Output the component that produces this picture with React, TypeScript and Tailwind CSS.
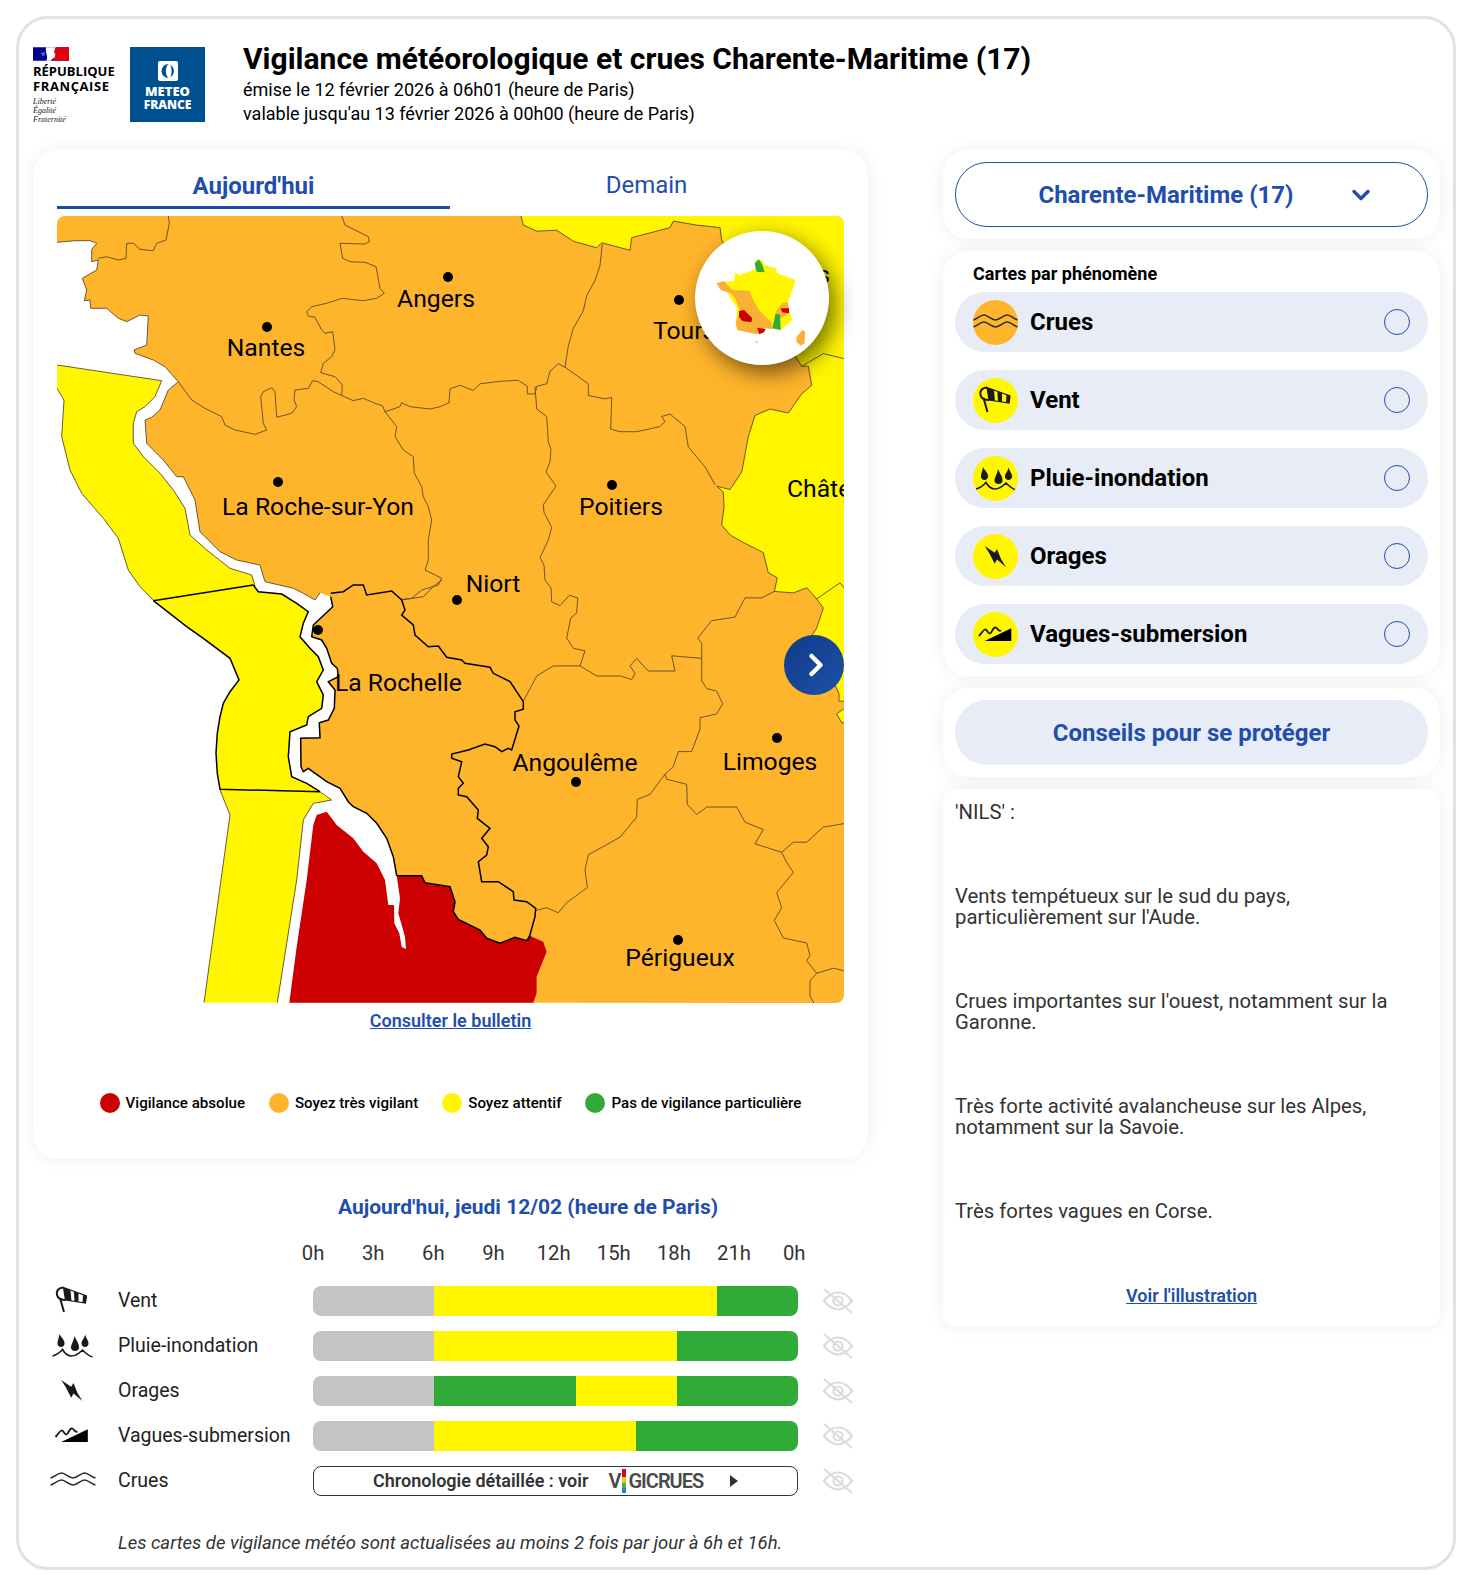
import { ChevronDown, ChevronRight } from "lucide-react";

const ORANGE = "#ffb52b";
const YELLOW = "#fff600";
const RED = "#cc0000";

// map outlines are noted in the coordinates of three crops, then moved to page coordinates
const crop = (ox: number, oy: number, sx: number, sy: number) => (pts: string) =>
  pts
    .trim()
    .split(/\s+/)
    .map((s) => {
      const [x, y] = s.split(",").map(Number);
      return `${(ox + x * sx).toFixed(1)},${(oy + y * sy).toFixed(1)}`;
    })
    .join(" ");
const a = crop(50, 210, 1 / 3, 1 / 3);
const b = crop(140, 580, 1 / 3, 1 / 3);
const c = crop(440, 210, 1 / 3, 1 / 1.985);

const redEdge =
  "1170,1067 1160,1082 1125,1072 1080,1090 1040,1075 1020,1050 955,1018 940,995 945,965 930,920 855,908 845,887 770,887";
const coast =
  "770,887 760,830 740,775 710,730 680,700 640,680 625,665 600,625 560,605 505,565 490,575 483,560 482,475 540,473 538,428 565,420 583,385 585,330 565,305 595,290 592,265 575,250 560,205 545,180 515,170 520,135 578,80 572,50";
const northCoast = a(
  "810,1148 795,1170 760,1150 730,1135 645,1115 630,1065 560,1050 510,1025 450,965 435,870 400,800 380,800 340,750 290,700 285,630 305,622 330,600 355,540 385,515 345,470 310,450 255,430 252,420 290,405 295,318 270,315 230,335 205,325 170,295 122,295 120,270 103,272 110,240 97,205 140,180 145,150 125,155 125,118 140,100 120,92 75,92 21,97"
);

const land = [
  a("21,18"),
  "844,216 844,1003",
  b("1180,1268 1190,1240 1190,1190 1220,1115 1210,1085"),
  b(redEdge),
  b(coast),
  b("540,38"),
  northCoast,
].join(" ");

const seaEdgeWest = b("192,1268 270,705 240,630");
const seaEdgeEast = a(
  "21,465 335,512 315,560 285,590 260,605 250,640 250,700 280,740 330,790 370,840 405,895 420,975 470,1020 540,1075 605,1095 615,1128"
);
const seaEdgeSouth = b("540,635 575,660 520,670 490,720 470,900 412,1268");
const seaEdgeNorth = a("310,1170 270,1130 235,1080 205,985 160,925 95,850 60,780 35,680 42,570 21,535");

const seaYellow = [
  seaEdgeEast,
  b(
    "355,35 425,42 470,70 505,95 490,130 480,170 510,205 535,230 550,270 530,305 550,345 545,385 505,410 500,435 450,455 445,530 455,590 500,610 575,660 520,670 490,720 470,900 412,1268 192,1268 270,705 240,630 232,580 228,520 232,460 240,410 250,370 270,335 297,300 270,235 190,175 140,140 40,62"
  ),
  a("270,1130 235,1080 205,985 160,925 95,850 60,780 35,680 42,570 21,535"),
].join(" ");

const eastEdge = c(
  "243,12 250,30 290,42 350,40 400,62 470,75 485,65 570,80 575,55 690,35 700,22 770,30 840,35 845,60 1085,310 1105,310 1115,348 1085,365 1045,403 990,395 945,408 925,450 905,520 870,555 830,548 850,560 852,590 845,625 870,645 910,660 970,680 985,720 1012,730 1003,757 1060,760 1100,750 1130,772 1150,790 1130,830 1115,845 1197,960 1197,975 1212,975"
);
const eastYellow = `${eastEdge} ${c("1212,12")}`;

const redZone = b(
  "448,1268 470,1100 500,900 520,735 530,705 560,695 590,735 640,775 670,815 710,850 735,900 745,975 762,975 763,1030 778,1060 785,1100 798,1107 795,1070 785,1035 775,1000 780,955 770,887 845,887 855,908 930,920 945,965 940,995 955,1018 1020,1050 1040,1075 1080,1090 1125,1072 1160,1082 1170,1067 1210,1085 1220,1115 1190,1190 1190,1240 1180,1268"
);

const thinLines = [
  northCoast,
  eastEdge,
  seaEdgeWest,
  seaEdgeEast,
  seaEdgeSouth,
  seaEdgeNorth,
  c("1190,1000 1212,990"),
  c("1190,1000 1205,1018 1212,1018"),
  a("355,18 358,40 348,90 320,100 310,122 270,118 250,100 230,100 228,145 205,150 170,140 145,145"),
  a(
    "875,18 885,45 955,80 958,95 945,102 870,100 878,145 900,155 945,157 978,170 990,235 1003,250 980,265 940,272 875,265 830,280 785,290 770,305 775,318 795,322 815,360 825,370 848,365 855,420 845,440 820,460 812,488 855,500 877,525 875,555"
  ),
  a(
    "385,515 425,570 465,595 515,620 525,645 555,660 615,673 650,660 640,640 632,560 640,545 665,533 675,545 680,622 725,610 740,590 732,570 735,540 775,535 788,512 805,515 850,545 910,572 940,565 975,580 998,588 1005,605 1050,590 1055,578 1080,590 1140,597 1170,590 1197,578"
  ),
  a(
    "1005,605 1040,650 1035,680 1060,720 1090,740 1093,790 1115,830 1120,860 1135,890 1145,930 1135,990 1135,1050 1125,1080 1175,1105 1165,1125 1115,1140 1085,1165 1055,1168"
  ),
  c(
    "27,383 30,355 60,348 100,358 120,345 180,340 235,338 262,350 262,365 285,365 290,350 320,345 330,320 355,305 375,312"
  ),
  c(
    "487,68 480,110 465,140 440,170 430,200 400,235 385,270 375,312 445,345 445,368 495,375 515,372 512,435 540,440 590,440 660,430 675,420 665,410 690,405 735,430 745,470 795,510 825,545"
  ),
  c(
    "285,350 290,395 320,410 325,460 333,475 330,500 318,520 348,548 310,585 312,600 335,630 325,655 300,690 312,705 315,735 333,750 335,778 360,785 388,765 413,770 410,800 392,810 380,850 400,870 435,875 420,905"
  ),
  c("250,975 290,925 340,905 420,905 470,925 540,925 575,932 585,920 570,905 590,890 625,915 705,915 695,885 785,890"),
  c("785,890 785,860 773,850 815,815 885,808 915,770 965,770 1003,757"),
  c(
    "785,890 785,935 800,950 830,955 848,980 830,1000 780,1008 780,1030 755,1075 715,1075 700,1105 675,1120 680,1130 740,1140 742,1180 770,1200 800,1185 890,1185 915,1215 970,1230 945,1258 1025,1275 1060,1255 1100,1255 1150,1225 1212,1218"
  ),
  c(
    "675,1120 630,1160 592,1170 590,1205 540,1245 445,1280 435,1310 442,1345 380,1375 355,1395 320,1385 288,1390"
  ),
  c(
    "1025,1275 1040,1295 1060,1315 1010,1355 1025,1385 1003,1410 1030,1445 1100,1455 1110,1480 1100,1490 1130,1515 1110,1530 1110,1560 1130,1585"
  ),
  c("1130,1515 1180,1505 1212,1510"),
  c("1130,772 1200,740 1212,750"),
  c("1085,310 1150,285 1212,295"),
  b("785,60 850,50 880,20 905,0"),
];

const blackLines = [
  b(coast),
  b(redEdge),
  b(
    "572,40 610,35 640,15 670,15 680,45 755,33 785,60 795,90 785,105 820,135 825,165 865,200 895,198 920,232 965,240 975,250 1050,262 1060,280 1110,305 1150,365 1150,388 1125,395 1125,420 1137,438 1115,510 1105,505 1085,515 1065,500 1035,492 985,510 935,522 935,535 965,545 955,590 970,610 955,625 955,645 980,650 1015,690 1012,715 1050,745 1025,775 1045,800 1040,825 1015,845 1025,905 1075,905 1120,935 1122,960 1160,965 1187,985 1185,1010 1165,1082"
  ),
  b(
    "340,15 355,35 425,42 470,70 505,95 490,130 480,170 510,205 535,230 550,270 530,305 550,345 545,385 505,410 500,435 450,455 445,530 455,590 500,610 540,635"
  ),
  b("40,62 140,140 190,175 270,235 297,300 270,335 250,370 240,410 232,460 228,520 232,580 240,628 540,635"),
  b("40,62 340,15"),
];

const cities = [
  { name: "Angers", dot: [448, 277], x: 436, y: 307, anchor: "middle" },
  { name: "Nantes", dot: [267, 327], x: 266, y: 356, anchor: "middle" },
  { name: "Tours", dot: [679, 300], x: 653, y: 339, anchor: "start" },
  { name: "La Roche-sur-Yon", dot: [278, 482], x: 318, y: 515, anchor: "middle" },
  { name: "Poitiers", dot: [612, 485], x: 621, y: 515, anchor: "middle" },
  { name: "Niort", dot: [457, 600], x: 493, y: 592, anchor: "middle" },
  { name: "La Rochelle", dot: [318, 630], x: 335, y: 691, anchor: "start" },
  { name: "Angoulême", dot: [576, 782], x: 575, y: 771, anchor: "middle" },
  { name: "Limoges", dot: [777, 738], x: 770, y: 770, anchor: "middle" },
  { name: "Périgueux", dot: [678, 940], x: 680, y: 966, anchor: "middle" },
  { name: "Châteauroux", dot: [900, 450], x: 787, y: 497, anchor: "start" },
  { name: "Orléans", dot: [900, 250], x: 830, y: 283, anchor: "end" },
];

function RegionMap() {
  return (
    <svg viewBox="57 216 787 787" className="block h-[787px] w-[787px] rounded-lg bg-white">
      <polygon points={land} fill={ORANGE} />
      <polygon points={eastYellow} fill={YELLOW} />
      <polygon points={c("1190,1000 1212,990 1212,1018 1205,1018")} fill={YELLOW} />
      <polygon points={seaYellow} fill={YELLOW} />
      <polygon points={redZone} fill={RED} />
      {thinLines.map((pts, i) => (
        <polyline key={i} points={pts} fill="none" stroke="#5b4a2a" strokeWidth="0.9" />
      ))}
      {blackLines.map((pts, i) => (
        <polyline key={i} points={pts} fill="none" stroke="#000" strokeWidth="1.5" />
      ))}
      {cities.map((city) => (
        <g key={city.name}>
          <circle cx={city.dot[0]} cy={city.dot[1]} r="5" fill="#000" />
          <text
            x={city.x}
            y={city.y}
            textAnchor={city.anchor as "start" | "middle" | "end"}
            fontFamily="Roboto, sans-serif"
            fontSize="24.7"
            fill="#000"
          >
            {city.name}
          </text>
        </g>
      ))}
    </svg>
  );
}

function MiniFrance() {
  return (
    <svg viewBox="43 48 402 402" className="h-[134px] w-[134px]">
      <polygon
        points="108,205 160,197 165,172 175,180 222,165 225,135 245,135 250,150 285,160 290,175 345,195 335,225 322,262 325,285 335,315 300,345 275,340 250,340 230,358 170,345 165,325 170,280 150,250 135,225"
        fill={YELLOW}
      />
      <polygon
        points="108,205 130,198 155,225 208,228 218,255 235,285 255,305 272,322 275,342 250,340 230,358 170,345 165,325 178,285 163,250 150,235 120,225"
        fill="#f9b037"
      />
      <polygon points="222,145 235,133 245,150 252,172 228,170" fill="#31ab37" />
      <polygon points="175,288 190,285 215,310 212,322 185,318 175,305" fill={RED} />
      <polygon points="230,338 255,342 250,352 235,358" fill={RED} />
      <polygon points="285,290 305,265 322,262 325,295 300,310" fill="#f9b037" />
      <polygon points="300,280 325,280 325,295 305,292" fill={RED} />
      <polygon points="285,295 298,300 300,345 275,340" fill="#31ab37" />
      <polygon points="348,365 365,345 373,350 372,385 360,392 347,380" fill="#f9b037" />
      <polygon points="222,378 232,380 228,385" fill="#f9b037" />
    </svg>
  );
}

function WindIcon() {
  return (
    <svg viewBox="0 0 45 45" className="h-full w-full" fill="none" stroke="#1a1a1a">
      <path d="M14 9.500C9 9.500 6.500 13 7.500 17 8.300 20 11.500 22 16 22" strokeWidth="2" />
      <path d="M10.500 20 14.500 34" strokeWidth="2" />
      <path d="M14 9.500 37 18 36 25 16 22Z" strokeWidth="1.2" />
      <path
        d="M14 9.500 20.900 12.050 22 22.900 16 22Z M24.350 13.300 28.950 15 29 23.950 25 23.350Z M33.550 16.700 37 18 36 25 33 24.550Z"
        fill="#1a1a1a"
        stroke="none"
      />
    </svg>
  );
}

function RainIcon() {
  return (
    <svg viewBox="0 0 45 45" className="h-full w-full" fill="#1a1a1a">
      <path d="M10 11C12 15 15.500 17 15 21 14.500 25 8.500 25 8 21 7.700 18 9.500 15 10 11Z" />
      <path d="M25 13C27 18 30 21 29.500 25 29 29 22 29 21.500 25 21.200 22 24.300 18 25 13Z" />
      <path d="M36 11C35.500 15 39.500 17 39 21 38.500 25 32.500 25 32 21 31.700 18 35 15 36 11Z" />
      <path
        d="M3 33C7 32 10 30 13 26.500 15 30 18 33 22 33 27 33 30 30 33 27 36 30 39 33 43 34"
        fill="none"
        stroke="#1a1a1a"
        strokeWidth="1.600"
      />
    </svg>
  );
}

function BoltIcon() {
  return (
    <svg viewBox="0 0 45 45" className="h-full w-full">
      <polygon points="11.700,12 21.700,18.700 24,15 28,25 33,33 24,25.500 21.700,29.700 16,18.700" fill="#1a1a1a" />
    </svg>
  );
}

function SurgeIcon() {
  return (
    <svg viewBox="0 0 45 45" className="h-full w-full">
      <polygon points="11.700,29 38.300,16.300 38.300,29" fill="#000" />
      <path
        d="M6 24C8 22 10 18 12 17.500 14 17 15 22 17 21.500 19 21 19.500 16 22 15.500 24.500 15 25 20 28 18.500"
        fill="none"
        stroke="#1a1a1a"
        strokeWidth="1.800"
      />
    </svg>
  );
}

function FloodIcon() {
  return (
    <svg viewBox="0 0 45 45" className="h-full w-full" fill="none" stroke="#2a2a2a" strokeWidth="1.500">
      <path d="M0 20C4 19 7 15 11 15 15 15 18 20 22.500 20 27 20 30 15 34 15 38 15 41 19 45 20" />
      <path d="M0 27C4 26 7 22 11 22 15 22 18 27 22.500 27 27 27 30 22 34 22 38 22 41 26 45 27" />
    </svg>
  );
}

function EyeSlash() {
  return (
    <svg viewBox="0 0 32 26" className="ml-[24px] h-[26px] w-[32px]" fill="none" stroke="#dcdcdc" strokeWidth="2.200">
      <path d="M2 13C7 6 12 4.500 16 4.500 20 4.500 25 6 30 13 25 19 20 21.500 16 21.500 12 21.500 7 19 2 13Z" />
      <circle cx="16" cy="13" r="4.500" />
      <path d="M2 1 30 25" />
    </svg>
  );
}

function Logos() {
  return (
    <div className="flex">
      <div className="w-[97px]">
        <svg viewBox="0 0 36 13.500" className="h-[14px] w-[36px]">
          <rect width="36" height="13.500" fill="#000091" />
          <rect x="20" width="16" height="13.500" fill="#e1000f" />
          <path d="M13 0H23C21 2 22 3 21 5 23 6.500 22 8 22 9.500 21 11 19 11 18 13.500H13C16 10 12 6 13 0Z" fill="#fff" />
          <path d="M8 6.500 12 5.500M9 8 12 7.500" stroke="#fff" strokeWidth="0.6" />
        </svg>
        <div className="mt-[3px] font-['Open_Sans',sans-serif] text-[13px] leading-[14.500px] font-bold text-black">
          <div>RÉPUBLIQUE</div>
          <div className="tracking-[0.6px]">FRANÇAISE</div>
        </div>
        <div className="mt-[4px] font-['Liberation_Serif',serif] text-[8px] leading-[9px] text-[#222] italic">
          <div>Liberté</div>
          <div>Égalité</div>
          <div>Fraternité</div>
        </div>
      </div>
      <div className="flex h-[75px] w-[75px] flex-col items-center bg-[#00508f] pt-[14px]">
        <svg viewBox="0 0 20 20" className="h-[20px] w-[20px]">
          <rect width="20" height="20" rx="2" fill="#fff" />
          <path d="M10.500 3A7 7 0 0 0 10.500 17C7 14 7 6 10.500 3Z" fill="#00508f" />
          <path d="M12.500 4A7 7 0 0 1 12.500 16C14 12 14 8 12.500 4Z" fill="#00508f" />
        </svg>
        <div className="mt-[4px] text-center font-['Open_Sans',sans-serif] leading-[13px] font-extrabold text-white">
          <div className="text-[13px]">METEO</div>
          <div className="text-[12px]">FRANCE</div>
        </div>
      </div>
    </div>
  );
}

function CardMap() {
  return (
    <div className="h-[1009px] rounded-[25px] bg-white px-[24px] shadow-[0_0_18px_rgba(0,0,0,0.07)]">
      <div className="flex h-[59px]">
        <div className="flex w-[393px] items-center justify-center border-b-[3px] border-[#1d4aa8] pt-[15px] text-[24px] font-bold text-[#1f4eac]">
          Aujourd'hui
        </div>
        <div className="flex w-[393px] items-center justify-center pt-[11px] text-[24px] text-[#1f4eac]">Demain</div>
      </div>
      <div className="relative mt-[7px]">
        <RegionMap />
        <div className="absolute top-[15px] left-[638px] overflow-hidden rounded-full bg-white shadow-[6px_8px_22px_rgba(0,0,0,0.55)]">
          <MiniFrance />
        </div>
        <div className="absolute top-[419px] left-[727px] flex h-[60px] w-[60px] items-center justify-center rounded-full bg-gradient-to-br from-[#0f3a86] to-[#1f50aa] pl-[3px]">
          <ChevronRight size={36} strokeWidth={3} className="text-white" />
        </div>
      </div>
      <div className="mt-[4px] text-center text-[18px] font-semibold text-[#1f4eac] underline">Consulter le bulletin</div>
      <div className="mt-[58px] flex items-center justify-center gap-[24px] text-[15.100px] font-medium text-black">
        <LegendDot className="bg-[#cc0000]" label="Vigilance absolue" />
        <LegendDot className="bg-[#ffb52b]" label="Soyez très vigilant" />
        <LegendDot className="bg-[#fff600]" label="Soyez attentif" />
        <LegendDot className="bg-[#31ab37]" label="Pas de vigilance particulière" />
      </div>
    </div>
  );
}

function LegendDot({ className, label }: { className: string; label: string }) {
  return (
    <div className="flex items-center gap-[6px]">
      <span className={`h-[20px] w-[20px] rounded-full ${className}`} />
      <span>{label}</span>
    </div>
  );
}

const GREY = "#c4c4c4";
const YEL = "#fff600";
const GRN = "#31ab37";

const timeline = [
  { label: "Vent", icon: <WindIcon />, bands: [[6, GREY], [14, YEL], [4, GRN]] },
  { label: "Pluie-inondation", icon: <RainIcon />, bands: [[6, GREY], [12, YEL], [6, GRN]] },
  { label: "Orages", icon: <BoltIcon />, bands: [[6, GREY], [7, GRN], [5, YEL], [6, GRN]] },
  { label: "Vagues-submersion", icon: <SurgeIcon />, bands: [[6, GREY], [10, YEL], [8, GRN]] },
] as { label: string; icon: React.ReactNode; bands: [number, string][] }[];

const hours = ["0h", "3h", "6h", "9h", "12h", "15h", "18h", "21h", "0h"];

function Chronology() {
  return (
    <div className="mt-[35px]">
      <div className="w-[990px] text-center text-[21px] leading-[26px] font-bold text-[#1f4eac]">
        Aujourd'hui, jeudi 12/02 (heure de Paris)
      </div>
      <div className="mt-[20px] ml-[250px] flex text-[20.300px] leading-[26px] text-[#333]">
        {hours.map((h, i) => (
          <div key={i} className="w-[60.150px] text-center">
            {h}
          </div>
        ))}
      </div>
      <div className="mt-[12px]">
        {timeline.map((row) => (
          <div key={row.label} className="flex h-[45px] items-center">
            <div className="ml-[14px] h-[45px] w-[50px] shrink-0">{row.icon}</div>
            <div className="ml-[21px] w-[195px] text-[19.500px] text-[#222]">{row.label}</div>
            <div className="flex h-[30px] w-[485px] overflow-hidden rounded-lg">
              {row.bands.map(([n, color], i) => (
                <div key={i} style={{ width: `${(n / 24) * 100}%`, background: color }} />
              ))}
            </div>
            <EyeSlash />
          </div>
        ))}
        <div className="flex h-[45px] items-center">
          <div className="ml-[15px] h-[45px] w-[50px] shrink-0">
            <FloodIcon />
          </div>
          <div className="ml-[20px] w-[195px] text-[19.500px] text-[#222]">Crues</div>
          <div className="flex h-[30px] w-[485px] items-center rounded-lg border border-[#333] pl-[59px] text-[18px] font-semibold text-[#333]">
            <span>Chronologie détaillée : voir</span>
            <span className="ml-[20px] flex items-center text-[20px] font-semibold tracking-[-1px] text-[#4a4a4a]">
              V
              <span className="mx-[2px] flex h-[24px] w-[4px] flex-col">
                <span className="h-[8px] bg-[#e1000f]" />
                <span className="h-[6px] bg-[#f5c518]" />
                <span className="h-[5px] bg-[#4caf50]" />
                <span className="h-[5px] bg-[#2b7fc4]" />
              </span>
              GICRUES
            </span>
            <span className="ml-[27px] h-0 w-0 border-y-[6px] border-l-[8px] border-y-transparent border-l-[#333]" />
          </div>
          <EyeSlash />
        </div>
      </div>
      <div className="mt-[28px] ml-[85px] text-[18.500px] leading-[24px] text-[#333] italic">
        Les cartes de vigilance météo sont actualisées au moins 2 fois par jour à 6h et 16h.
      </div>
    </div>
  );
}

const phenomena = [
  { label: "Crues", bg: "bg-[#ffb52b]", icon: <FloodIcon /> },
  { label: "Vent", bg: "bg-[#fff600]", icon: <WindIcon /> },
  { label: "Pluie-inondation", bg: "bg-[#fff600]", icon: <RainIcon /> },
  { label: "Orages", bg: "bg-[#fff600]", icon: <BoltIcon /> },
  { label: "Vagues-submersion", bg: "bg-[#fff600]", icon: <SurgeIcon /> },
];

function SidePanel() {
  return (
    <div className="ml-[75px] flex w-[497px] flex-col gap-[12px]">
      <div className="rounded-[25px] bg-white p-[12px] shadow-[0_0_18px_rgba(0,0,0,0.07)]">
        <div className="relative flex h-[65px] items-center justify-center rounded-[32px] border border-[#1f4eac] pr-[51px] text-[24px] font-bold text-[#1f4eac]">
          Charente-Maritime (17)
          <ChevronDown size={28} strokeWidth={3} className="absolute right-[52px]" />
        </div>
      </div>
      <div className="rounded-[25px] bg-white px-[12px] pt-[11px] pb-[12px] shadow-[0_0_18px_rgba(0,0,0,0.07)]">
        <div className="pl-[18px] text-[18px] leading-[24px] font-bold text-black">Cartes par phénomène</div>
        <div className="mt-[6px] flex flex-col gap-[18px]">
          {phenomena.map((item) => (
            <div key={item.label} className="flex h-[60px] items-center rounded-[30px] bg-[#e8ecf6] pr-[18px] pl-[18px]">
              <div className={`h-[45px] w-[45px] overflow-hidden rounded-full ${item.bg}`}>{item.icon}</div>
              <div className="ml-[12px] grow text-[24px] font-bold text-black">{item.label}</div>
              <div className="h-[26px] w-[26px] rounded-full border border-[#1f4eac]" />
            </div>
          ))}
        </div>
      </div>
      <div className="rounded-[25px] bg-white p-[12px] shadow-[0_0_18px_rgba(0,0,0,0.07)]">
        <div className="flex h-[65px] items-center justify-center rounded-[32px] bg-[#e8ecf6] text-[24px] font-bold text-[#1f4eac]">
          Conseils pour se protéger
        </div>
      </div>
      <div className="h-[537px] rounded-xl bg-white px-[12px] pt-[13px] text-[20.300px] leading-[21px] text-[#333] shadow-[0_0_18px_rgba(0,0,0,0.07)]">
        <p className="mb-[63px]">'NILS' :</p>
        <p className="mb-[63px]">
          Vents tempétueux sur le sud du pays,
          <br />
          particulièrement sur l'Aude.
        </p>
        <p className="mb-[63px]">
          Crues importantes sur l'ouest, notamment sur la
          <br />
          Garonne.
        </p>
        <p className="mb-[63px]">
          Très forte activité avalancheuse sur les Alpes,
          <br />
          notamment sur la Savoie.
        </p>
        <p>Très fortes vagues en Corse.</p>
        <div className="mt-[63px] text-center text-[18px] font-semibold text-[#1f4eac] underline">Voir l'illustration</div>
      </div>
    </div>
  );
}

export default function App() {
  return (
    <div className="bg-white pt-[16px] pr-[20px] pb-[15px] pl-[16px] font-['Roboto',sans-serif]">
      <div className="h-[1554px] rounded-[32px] border-[3px] border-[#e2e2e2] pt-[28px] pr-[13px] pl-[14px]">
        <div className="flex h-[75px]">
          <Logos />
          <div className="ml-[38px] text-black">
            <h1 className="-mt-[6px] text-[30px] leading-[36px] font-bold">
              Vigilance météorologique et crues Charente-Maritime (17)
            </h1>
            <div className="mt-[1px] text-[18px] leading-[24px]">émise le 12 février 2026 à 06h01 (heure de Paris)</div>
            <div className="text-[18px] leading-[24px]">valable jusqu'au 13 février 2026 à 00h00 (heure de Paris)</div>
          </div>
        </div>
        <div className="mt-[28px] flex">
          <div className="w-[835px] shrink-0">
            <CardMap />
            <Chronology />
          </div>
          <SidePanel />
        </div>
      </div>
    </div>
  );
}
